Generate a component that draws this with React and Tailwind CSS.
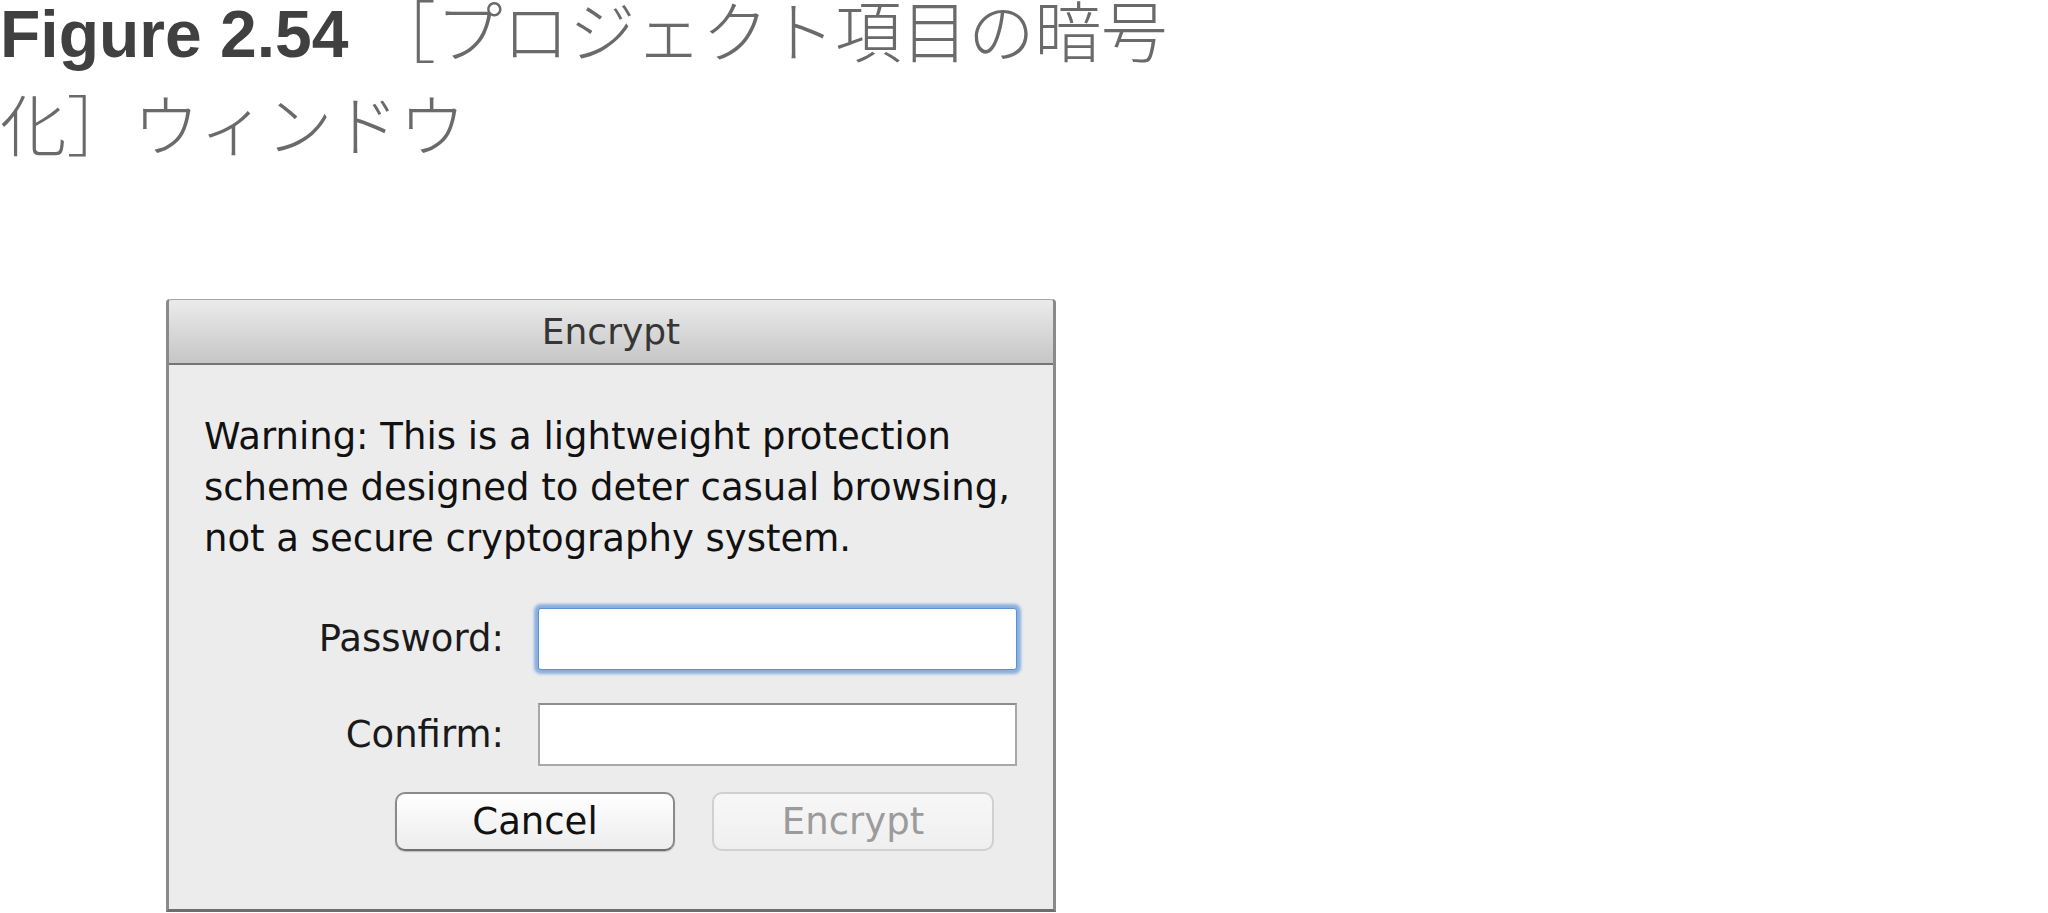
export default function App() {
  return (
    <div className="w-[2048px] h-[913px] bg-white overflow-hidden">
      <div className="-mt-[16px] leading-[88px] text-[66.5px] font-['Noto_Sans_CJK_JP',sans-serif] font-light text-[#6a6a6a] whitespace-nowrap">
        <div className="flex items-baseline">
          <span className="font-['Liberation_Sans',Arial,sans-serif] font-bold text-[66px] text-[#404040]">
            Figure 2.54
          </span>
          <span className="ml-[21px]">［プロジェクト項目の暗号</span>
        </div>
        <div>化］ウィンドウ</div>
      </div>

      <div className="ml-[166px] mt-[133px] w-[890px] h-[613px] flex flex-col border-x-[3px] border-b-[3px] border-[#8a8a8a] border-b-[#6e6e6e] rounded-t-[4px] bg-[#ececec] font-['DejaVu_Sans',sans-serif]">
        <div className="h-[66px] shrink-0 flex items-center justify-center border-t border-b-2 border-t-[#a6a6a6] border-b-[#747474] rounded-t-[3px] bg-linear-to-b from-[#ebebeb] to-[#c6c6c6] text-[36px] text-[#363636]">
          Encrypt
        </div>

        <div className="flex-1 flex flex-col pl-[35px] pr-[36px] pt-[46px]">
          <p className="text-[37px] leading-[51px] text-[#111]">
            Warning: This is a lightweight protection
            <br />
            scheme designed to deter casual browsing,
            <br />
            not a secure cryptography system.
          </p>

          <div className="mt-[44px] flex items-center justify-end gap-[34px]">
            <label className="text-[37px] text-[#1a1a1a]">Password:</label>
            <div className="w-[479px] h-[62px] bg-white border border-[#5d8fd1] rounded-[3px] shadow-[0_0_3px_4px_rgba(112,160,220,0.8)]" />
          </div>

          <div className="mt-[33px] flex items-center justify-end gap-[34px]">
            <label className="text-[37px] text-[#1a1a1a]">Confirm:</label>
            <div className="w-[479px] h-[63px] bg-white border-2 border-[#a8a8a8] border-t-[#8e8e8e]" />
          </div>

          <div className="mt-[26px] mr-[23px] flex justify-end gap-[37px]">
            <button className="w-[280px] h-[59px] rounded-[10px] border-2 border-[#8a8a8a] border-b-[#6f6f6f] bg-linear-to-b from-white to-[#ededed] shadow-[0_1px_1px_rgba(0,0,0,0.2)] text-[37px] text-[#111]">
              Cancel
            </button>
            <button className="w-[282px] h-[59px] rounded-[10px] border-2 border-[#d0d0d0] bg-linear-to-b from-[#f7f7f7] to-[#efefef] text-[37px] text-[#9b9b9b]">
              Encrypt
            </button>
          </div>
        </div>
      </div>
    </div>
  )
}
